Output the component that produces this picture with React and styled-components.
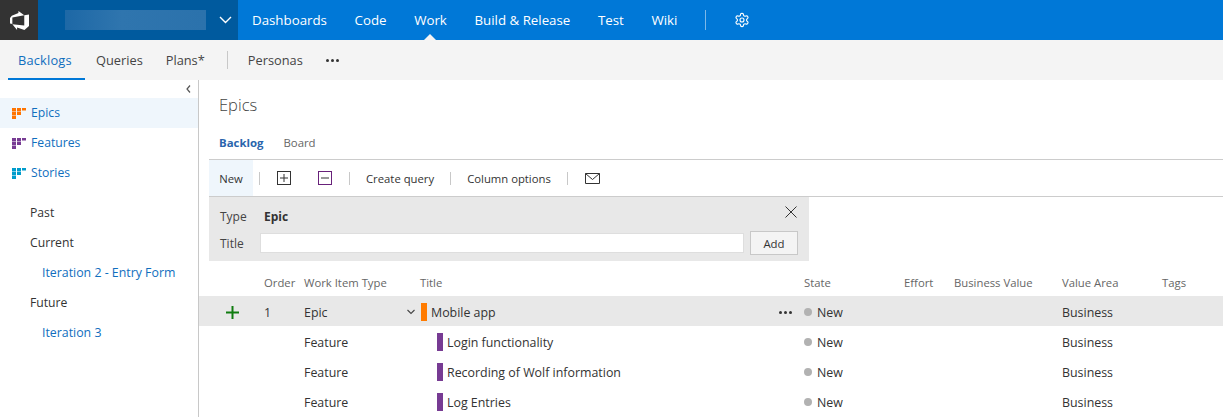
import React from "react";
import styled, { createGlobalStyle } from "styled-components";

const Global = createGlobalStyle`
  html, body { margin: 0; padding: 0; background: #fff; overflow: hidden; }
  body { font-family: "Open Sans", "Noto Sans", "Liberation Sans", sans-serif; font-size: 12px; color: #333; }
  * { box-sizing: border-box; }
`;
const Page = styled.div`width: 1223px; height: 417px; overflow: hidden; display: flex; flex-direction: column;`;
const TopBar = styled.header`height: 40px; background: #0078d7; display: flex; align-items: stretch; color: #fff; flex: none;`;
const LogoBox = styled.div`width: 38px; background: #333; display: flex; align-items: center; justify-content: center;`;
const Project = styled.div`width: 200px; background: #005a9e; display: flex; align-items: center; padding-left: 27px; position: relative;`;
const Blur = styled.div`width: 141px; height: 20px; background: linear-gradient(90deg, #1d68a6, #2f75ae 40%, #2b72ac); filter: blur(.5px);`;
const Caret = styled.svg`margin-left: 13px; width: 13px; height: 8px;`;
const TopNav = styled.nav`display: flex; align-items: center; margin-left: 14px; gap: 27.6px; font-size: 13.3px;`;
const TopLink = styled.span`position: relative; line-height: 40px; height: 40px; color: #fff; white-space: nowrap; ${p => p.$active && `
  &::after { content: ""; position: absolute; left: 50%; bottom: 0; margin-left: -6px; border: 6px solid transparent; border-top: 0; border-bottom-color: #f4f4f4; }
`}`;
const TopDivider = styled.span`width: 1px; height: 20px; background: #7db8e8;`;
const SubBar = styled.div`height: 40px; background: #f4f4f4; display: flex; align-items: center; flex: none; padding-left: 8px; font-size: 12.8px; color: #444;`;
const SubTab = styled.span`height: 40px; line-height: 40px; padding: 0 12px 0 ${p => p.$active ? 10 : 11}px; width: ${p => p.$active ? "77px" : "auto"}; letter-spacing: ${p => p.$active ? ".2px" : 0}; white-space: nowrap; color: ${p => p.$active ? "#106ebe" : "#444"}; border-bottom: 2px solid ${p => p.$active ? "#0078d7" : "transparent"};`;
const SubDivider = styled.span`width: 1px; height: 18px; background: #c8c8c8; margin: 0 9px 0 10px;`;
const Dots = styled.span`display: inline-flex; gap: 2px; margin: ${p => p.$m || 0}; span { width: 3px; height: 3px; border-radius: 50%; background: #333; }`;
const Body = styled.div`flex: 1; display: flex; min-height: 0;`;
const Side = styled.aside`width: 199px; flex: none; border-right: 1px solid #c8c8c8; display: flex; flex-direction: column; font-size: 12.2px;`;
const Collapse = styled.div`height: 18px; display: flex; justify-content: flex-end; align-items: center; padding-right: 7px;`;
const LevelItem = styled.div`height: 30px; display: flex; align-items: center; padding: 0 0 2px 12px; gap: 5px; color: #106ebe; background: ${p => p.$active ? "#eff6fc" : "transparent"};`;
const LevelIcon = styled.svg`flex: none; width: 14px; height: 11px; margin-top: 2px;`;
const Spacer = styled.div`height: 10px;`;
const IterItem = styled.div`height: 30px; line-height: 30px; padding-left: ${p => p.$sub ? 42 : 30}px; font-size: ${p => p.$sub ? 12.35 : 12.2}px; color: ${p => p.$sub ? "#106ebe" : "#333"};`;
const Main = styled.main`flex: 1; min-width: 0; display: flex; flex-direction: column;`;
const Title = styled.h1`margin: 0; height: 50px; padding: 12px 0 0 20px; font-size: 16.5px; line-height: 26px; font-weight: 300; color: #444;`;
const Tabs = styled.div`display: flex; height: 29px; padding: 0 0 5px 20px; gap: 20px; align-items: center; font-size: 11.4px;`;
const Tab = styled.span`font-weight: ${p => p.$active ? 700 : 400}; color: ${p => p.$active ? "#2a65ad" : "#666"};`;
const Toolbar = styled.div`margin-left: 10px; height: 38px; border-top: 1px solid #ccc; border-bottom: 1px solid #ccc; display: flex; align-items: center; font-size: 11.3px; color: #333;`;
const NewBtn = styled.span`width: 44px; height: 36px; line-height: 37px; text-align: center; background: #eff6fc;`;
const ToolDiv = styled.span`width: 1px; height: 13px; background: #c8c8c8; margin: 0 ${p => p.$r || 16}px 0 ${p => p.$l || 16}px;`;
const SquareIcon = styled.svg`width: 14px; height: 14px; margin: ${p => p.$m || 0};`;
const ToolText = styled.span`white-space: nowrap;`;
const AddPanel = styled.div`margin-left: 10px; width: 600px; height: 64px; background: #e8e8e8; position: relative; padding: 9px 11px 0; display: flex; flex-direction: column; gap: 5px;`;
const PanelRow = styled.div`display: flex; align-items: center; height: ${p => p.$h}px;`;
const PanelLabel = styled.span`width: 44px; color: #444;`;
const PanelInput = styled.div`width: 484px; height: 20px; margin-left: -4px; background: #fff; border: 1px solid #dedede;`;
const AddBtn = styled.button`width: 48px; height: 24px; margin-left: 6px; background: #f4f4f4; border: 1px solid #c8c8c8; font: inherit; font-size: 11.4px; color: #333; padding: 0;`;
const Close = styled.svg`position: absolute; right: 12px; top: 9px; width: 12px; height: 12px;`;
const cols = "65px 40px 116px 384px 100px 50px 108px 100px 1fr";
const HeadRow = styled.div`display: grid; grid-template-columns: ${cols}; height: 35px; align-items: center; padding-top: 8px; color: #666; font-size: 11.3px;`;
const Row = styled.div`display: grid; grid-template-columns: ${cols}; height: 30px; padding-top: 2px; align-items: center; font-size: 12.4px; color: #333; background: ${p => p.$selected ? "#e8e8e8" : "transparent"};`;
const PlusCell = styled.div`padding-left: 27px; display: flex; align-items: center;`;
const TitleCell = styled.div`display: flex; align-items: center; position: relative; padding-left: ${p => p.$child ? 17 : 1}px; gap: 4px;`;
const ColorBar = styled.span`width: 6px; height: 18px; background: ${p => p.$c}; flex: none;`;
const Chevron = styled.svg`position: absolute; left: -13px; top: 50%; margin-top: -3px; width: 8px; height: 6px;`;
const MoreCell = styled.span`position: absolute; right: 12px; top: 50%; margin-top: -1px; display: flex;`;
const StateCell = styled.div`display: flex; align-items: center; gap: 5px;`;
const Dot = styled.span`width: 8px; height: 8px; border-radius: 50%; background: #b2b2b2;`;

const BacklogIcon = ({ c }) => (
  <LevelIcon viewBox="0 0 14 11">
    <g fill={c}>
      <rect x="0" y="0" width="4" height="3.5" /><rect x="5" y="0" width="4" height="3.5" /><rect x="10" y="0" width="4" height="2.5" />
      <rect x="0" y="4" width="4" height="3" /><rect x="5" y="4" width="4" height="3" />
      <rect x="0" y="7.5" width="4" height="3.5" />
    </g>
  </LevelIcon>
);
const More = ({ m }) => <Dots $m={m}><span /><span /><span /></Dots>;
const Box = ({ c, plus, m }) => (
  <SquareIcon $m={m} viewBox="0 0 14 14">
    <rect x=".5" y=".5" width="13" height="13" fill="none" stroke={c} />
    <path d={plus ? "M3 7h8M7 3v8" : "M3 7h8"} stroke="#333" />
  </SquareIcon>
);
const rows = [
  ["Login functionality"], ["Recording of Wolf information"], ["Log Entries"],
];

export default function App() {
  return (
    <Page>
      <Global />
      <TopBar>
        <LogoBox>
          <svg width="19" height="19" viewBox="0 0 24 24">
            <path fill="#fff" d="M0 8.877L2.247 5.91l8.405-3.416V.022l7.37 5.393L2.966 8.338v8.225L0 15.707zm24-4.45v14.651l-5.753 4.9-9.303-3.167v3.167l-5.978-7.39 15.057 1.707V5.415z" />
          </svg>
        </LogoBox>
        <Project>
          <Blur />
          <Caret viewBox="0 0 13 8"><path d="M1 1l5.5 5.5L12 1" fill="none" stroke="#fff" strokeWidth="1.4" /></Caret>
        </Project>
        <TopNav>
          <TopLink>Dashboards</TopLink>
          <TopLink>Code</TopLink>
          <TopLink $active>Work</TopLink>
          <TopLink>Build &amp; Release</TopLink>
          <TopLink>Test</TopLink>
          <TopLink>Wiki</TopLink>
          <TopDivider />
          <svg width="16" height="16" viewBox="0 0 24 24" fill="none" stroke="#fff" strokeWidth="1.7" strokeLinecap="round" strokeLinejoin="round">
            <path d="M12.22 2h-.44a2 2 0 0 0-2 2v.18a2 2 0 0 1-1 1.73l-.43.25a2 2 0 0 1-2 0l-.15-.08a2 2 0 0 0-2.73.73l-.22.38a2 2 0 0 0 .73 2.73l.15.1a2 2 0 0 1 1 1.72v.51a2 2 0 0 1-1 1.74l-.15.09a2 2 0 0 0-.73 2.73l.22.38a2 2 0 0 0 2.73.73l.15-.08a2 2 0 0 1 2 0l.43.25a2 2 0 0 1 1 1.73V20a2 2 0 0 0 2 2h.44a2 2 0 0 0 2-2v-.18a2 2 0 0 1 1-1.73l.43-.25a2 2 0 0 1 2 0l.15.08a2 2 0 0 0 2.73-.73l.22-.39a2 2 0 0 0-.73-2.73l-.15-.08a2 2 0 0 1-1-1.74v-.5a2 2 0 0 1 1-1.74l.15-.09a2 2 0 0 0 .73-2.73l-.22-.38a2 2 0 0 0-2.73-.73l-.15.08a2 2 0 0 1-2 0l-.43-.25a2 2 0 0 1-1-1.73V4a2 2 0 0 0-2-2z" />
            <circle cx="12" cy="12" r="3" />
          </svg>
        </TopNav>
      </TopBar>
      <SubBar>
        <SubTab $active>Backlogs</SubTab>
        <SubTab>Queries</SubTab>
        <SubTab>Plans*</SubTab>
        <SubDivider />
        <SubTab>Personas</SubTab>
        <More m="0 0 0 11px" />
      </SubBar>
      <Body>
        <Side>
          <Collapse>
            <svg width="5" height="8" viewBox="0 0 5 8"><path d="M4 .5L1 4l3 3.5" fill="none" stroke="#555" strokeWidth="1.2" /></svg>
          </Collapse>
          <LevelItem $active><BacklogIcon c="#ff7400" />Epics</LevelItem>
          <LevelItem><BacklogIcon c="#773b93" />Features</LevelItem>
          <LevelItem><BacklogIcon c="#009ccc" />Stories</LevelItem>
          <Spacer />
          <IterItem>Past</IterItem>
          <IterItem>Current</IterItem>
          <IterItem $sub>Iteration 2 - Entry Form</IterItem>
          <IterItem>Future</IterItem>
          <IterItem $sub>Iteration 3</IterItem>
        </Side>
        <Main>
          <Title>Epics</Title>
          <Tabs><Tab $active>Backlog</Tab><Tab>Board</Tab></Tabs>
          <Toolbar>
            <NewBtn>New</NewBtn>
            <ToolDiv $l={6} $r={17} />
            <Box c="#333" plus />
            <Box c="#68217a" m="0 0 0 27px" />
            <ToolDiv $l={17} $r={16} />
            <ToolText>Create query</ToolText>
            <ToolDiv $l={16} $r={16} />
            <ToolText>Column options</ToolText>
            <ToolDiv $l={16} $r={17} />
            <svg width="15" height="11" viewBox="0 0 15 11"><path d="M.5.5h14v10H.5zM.5.5l7 6 7-6" fill="none" stroke="#333" /></svg>
          </Toolbar>
          <AddPanel>
            <PanelRow $h={20}><PanelLabel>Type</PanelLabel><b>Epic</b></PanelRow>
            <PanelRow $h={24}><PanelLabel>Title</PanelLabel><PanelInput /><AddBtn>Add</AddBtn></PanelRow>
            <Close viewBox="0 0 12 12"><path d="M.5.5l11 11M11.5.5l-11 11" stroke="#333" fill="none" /></Close>
          </AddPanel>
          <HeadRow>
            <span /><span>Order</span><span>Work Item Type</span><span>Title</span><span>State</span><span>Effort</span><span>Business Value</span><span>Value Area</span><span>Tags</span>
          </HeadRow>
          <Row $selected>
            <PlusCell>
              <svg width="13" height="13" viewBox="0 0 13 13"><path d="M0 6.5h13M6.5 0v13" stroke="#107c10" strokeWidth="2" /></svg>
            </PlusCell>
            <span>1</span><span>Epic</span>
            <TitleCell>
              <Chevron viewBox="0 0 8 6"><path d="M.5 1l3.5 3.5L7.5 1" fill="none" stroke="#444" strokeWidth="1.1" /></Chevron>
              <ColorBar $c="#ff7b00" />Mobile app
              <MoreCell><More /></MoreCell>
            </TitleCell>
            <StateCell><Dot />New</StateCell><span /><span /><span>Business</span><span />
          </Row>
          {rows.map(([t]) => (
            <Row key={t}>
              <span /><span /><span>Feature</span>
              <TitleCell $child><ColorBar $c="#773b93" />{t}</TitleCell>
              <StateCell><Dot />New</StateCell><span /><span /><span>Business</span><span />
            </Row>
          ))}
        </Main>
      </Body>
    </Page>
  );
}
